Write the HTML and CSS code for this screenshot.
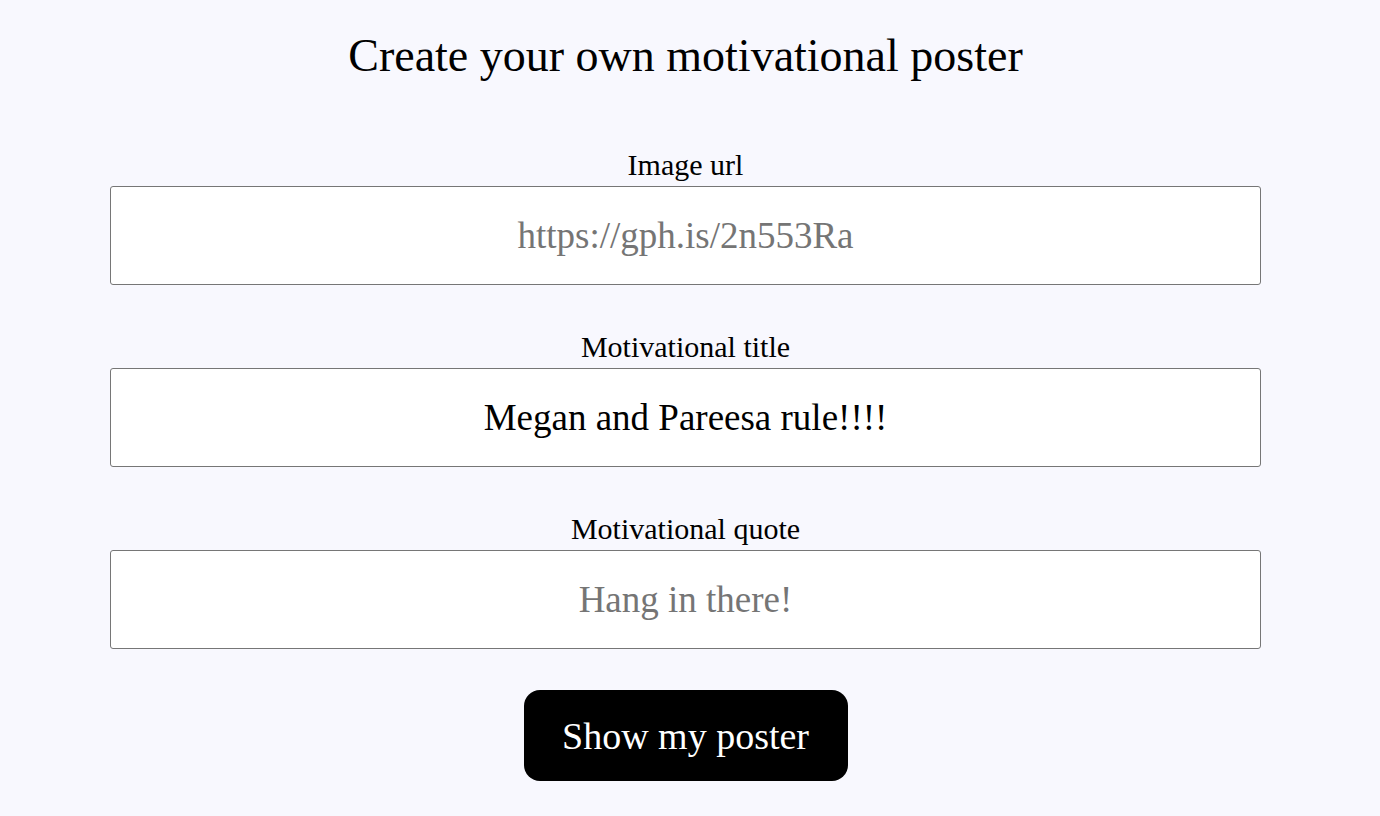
FILE: index.html
```html
<!DOCTYPE html>
<html lang="en">
<head>
<meta charset="utf-8">
<title>Create your own motivational poster</title>
<link rel="stylesheet" href="styles.css">
</head>
<body>
<main class="page">
  <h1 class="title">Create your own motivational poster</h1>
  <form class="form">
    <label class="field">
      <span class="field-label">Image url</span>
      <input class="field-input" type="text" placeholder="https://gph.is/2n553Ra">
    </label>
    <label class="field">
      <span class="field-label">Motivational title</span>
      <input class="field-input" type="text" value="Megan and Pareesa rule!!!!">
    </label>
    <label class="field">
      <span class="field-label">Motivational quote</span>
      <input class="field-input" type="text" placeholder="Hang in there!">
    </label>
    <button class="submit" type="button">Show my poster</button>
  </form>
</main>
</body>
</html>
```
FILE: styles.css
```css
html, body {
  margin: 0;
  padding: 0;
  background: #f8f8fe;
}
body {
  font-family: "Liberation Serif", "Times New Roman", serif;
  color: #000;
}
.page {
  width: 1371px;
  display: flex;
  flex-direction: column;
  align-items: center;
}
.title {
  margin: 27px 0 0;
  font-size: 46px;
  font-weight: 400;
  line-height: 58px;
}
.form {
  width: 1151px;
  display: flex;
  flex-direction: column;
  align-items: center;
  margin-top: 61px;
}
.field {
  width: 100%;
  display: flex;
  flex-direction: column;
  align-items: center;
  margin-bottom: 43px;
}
.field-label {
  font-size: 30px;
  line-height: 38px;
  margin-bottom: 2px;
}
.field-input {
  box-sizing: border-box;
  width: 100%;
  height: 99px;
  border: 1.5px solid #767676;
  border-radius: 3px;
  background: #fff;
  font-family: inherit;
  font-size: 37px;
  text-align: center;
  color: #000;
  padding: 0 10px;
}
.field-input::placeholder {
  color: #757575;
}
.submit {
  margin-top: -2px;
  width: 324px;
  height: 91px;
  border: none;
  border-radius: 16px;
  background: #000;
  color: #fff;
  font-family: inherit;
  font-size: 38px;
  cursor: pointer;
}
```
